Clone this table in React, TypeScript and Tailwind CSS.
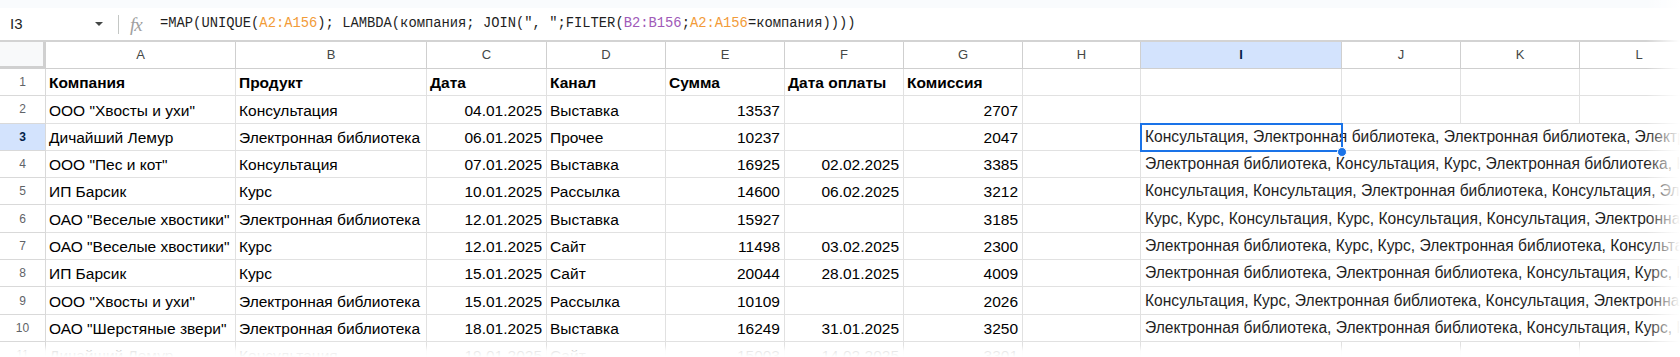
import React from 'react';

// column widths (A..H), then I, J, K, L
const W = ['w-[190px]', 'w-[191px]', 'w-[120px]', 'w-[119px]', 'w-[119px]', 'w-[119px]', 'w-[119px]', 'w-[118px]'];
const LETTERS = ['A', 'B', 'C', 'D', 'E', 'F', 'G', 'H'];
// right-aligned columns: C (date), E (sum), F (payment date), G (commission)
const RIGHT = [false, false, true, false, true, true, true, false];

type Row = { n: number; cells: string[]; i?: string };

const ROWS: Row[] = [
  { n: 2, cells: ['ООО "Хвосты и ухи"', 'Консультация', '04.01.2025', 'Выставка', '13537', '', '2707'] },
  {
    n: 3,
    cells: ['Дичайший Лемур', 'Электронная библиотека', '06.01.2025', 'Прочее', '10237', '', '2047'],
    i: 'Консультация, Электронная библиотека, Электронная библиотека, Электронная библиотека, Курс',
  },
  {
    n: 4,
    cells: ['ООО "Пес и кот"', 'Консультация', '07.01.2025', 'Выставка', '16925', '02.02.2025', '3385'],
    i: 'Электронная библиотека, Консультация, Курс, Электронная библиотека, Курс',
  },
  {
    n: 5,
    cells: ['ИП Барсик', 'Курс', '10.01.2025', 'Рассылка', '14600', '06.02.2025', '3212'],
    i: 'Консультация, Консультация, Электронная библиотека, Консультация, Электронная библиотека',
  },
  {
    n: 6,
    cells: ['ОАО "Веселые хвостики"', 'Электронная библиотека', '12.01.2025', 'Выставка', '15927', '', '3185'],
    i: 'Курс, Курс, Консультация, Курс, Консультация, Консультация, Электронная библиотека',
  },
  {
    n: 7,
    cells: ['ОАО "Веселые хвостики"', 'Курс', '12.01.2025', 'Сайт', '11498', '03.02.2025', '2300'],
    i: 'Электронная библиотека, Курс, Курс, Электронная библиотека, Консультация, Курс',
  },
  {
    n: 8,
    cells: ['ИП Барсик', 'Курс', '15.01.2025', 'Сайт', '20044', '28.01.2025', '4009'],
    i: 'Электронная библиотека, Электронная библиотека, Консультация, Курс, Курс',
  },
  {
    n: 9,
    cells: ['ООО "Хвосты и ухи"', 'Электронная библиотека', '15.01.2025', 'Рассылка', '10109', '', '2026'],
    i: 'Консультация, Курс, Электронная библиотека, Консультация, Электронная библиотека',
  },
  {
    n: 10,
    cells: ['ОАО "Шерстяные звери"', 'Электронная библиотека', '18.01.2025', 'Выставка', '16249', '31.01.2025', '3250'],
    i: 'Электронная библиотека, Электронная библиотека, Консультация, Курс, Курс',
  },
  { n: 11, cells: ['Дичайший Лемур', 'Консультация', '19.01.2025', 'Сайт', '15003', '14.02.2025', '3301'] },
];

const HEAD = ['Компания', 'Продукт', 'Дата', 'Канал', 'Сумма', 'Дата оплаты', 'Комиссия'];

function RowHeader({ n, active }: { n: number; active?: boolean }) {
  return (
    <div
      className={`w-[46px] shrink-0 flex items-center justify-center border-r border-b border-[#d9d9d9] text-[12px] ${
        active ? 'bg-[#d3e3fd] text-[#041e49] font-bold' : 'bg-white text-[#5f6368]'
      }`}
    >
      {n}
    </div>
  );
}

function EmptyTail() {
  return (
    <>
      <div className="w-[201px] shrink-0 border-r border-b border-[#e1e1e1]" />
      <div className="w-[119px] shrink-0 border-r border-b border-[#e1e1e1]" />
      <div className="w-[119px] shrink-0 border-r border-b border-[#e1e1e1]" />
      <div className="flex-1 border-b border-[#e1e1e1]" />
    </>
  );
}

function DataRow({ row, bold }: { row: Row; bold?: boolean }) {
  const cells = [...row.cells, ''];
  const selected = row.n === 3;
  return (
    <div className="flex h-[27.3px]">
      <RowHeader n={row.n} active={selected} />
      {cells.map((c, k) => (
        <div
          key={k}
          className={`${W[k]} shrink-0 flex items-end pb-[3px] pl-[3px] pr-[4px] border-r border-b border-[#e1e1e1] overflow-hidden whitespace-nowrap leading-[18px] text-[15.5px] text-black ${
            RIGHT[k] && !bold ? 'justify-end' : 'justify-start'
          } ${bold ? 'font-bold' : ''}`}
        >
          {c}
        </div>
      ))}
      {row.i ? (
        <div className="relative flex-1 min-w-0 border-b border-[#e1e1e1]">
          <div className="h-full flex items-end pb-[4px] pl-[4px] overflow-hidden whitespace-nowrap text-[15.6px] leading-[18px] text-[#1f1f1f]">
            {row.i}
          </div>
          {selected && (
            <>
              <div className="absolute left-[-1px] top-[-1px] w-[203px] h-[29px] border-2 border-[#1a73e8] pointer-events-none" />
              <div className="absolute left-[196px] top-[23px] w-[10px] h-[10px] rounded-full bg-[#1a73e8] border border-white" />
            </>
          )}
        </div>
      ) : (
        <EmptyTail />
      )}
    </div>
  );
}

function FormulaBar() {
  return (
    <div className="h-[32px] flex items-center bg-white">
      <div className="w-[92px] pl-[10px] text-[15px] text-[#1f1f1f]">I3</div>
      <svg width="10" height="6" viewBox="0 0 10 6" className="ml-[2px]">
        <path d="M1 1h8L5 5z" fill="#444746" />
      </svg>
      <div className="ml-[14px] w-px h-[19px] bg-[#c4c7c5]" />
      <div className="ml-[11px] w-[30px] font-['Liberation_Serif',serif] italic text-[19px] leading-none text-[#a0a0a0] tracking-[-1px]">
        fx
      </div>
      <div className="font-['Liberation_Mono',monospace] text-[13.8px] text-[#1f1f1f] whitespace-nowrap">
        =MAP(UNIQUE(<span className="text-[#f29b38]">A2:A156</span>); LAMBDA(компания; JOIN(", ";FILTER(
        <span className="text-[#a05ab8]">B2:B156</span>;<span className="text-[#f29b38]">A2:A156</span>=компания))))
      </div>
    </div>
  );
}

export default function App() {
  return (
    <div className="relative w-[1680px] h-[357px] overflow-hidden bg-white font-['Liberation_Sans',Arial,sans-serif]">
      <div className="h-[8px] bg-[#f9fbfd]" />
      <FormulaBar />

      {/* column headers */}
      <div className="flex h-[29px] border-t-2 border-[#d3d3d3]">
        <div className="w-[46px] shrink-0 bg-[#f8f9fa] border-r-[3px] border-b-[3px] border-[#d0d0d0]" />
        {LETTERS.map((l, k) => (
          <div
            key={l}
            className={`${W[k]} shrink-0 flex items-center justify-center border-r border-b border-[#cfcfcf] text-[13px] text-[#444746]`}
          >
            {l}
          </div>
        ))}
        <div className="w-[201px] shrink-0 flex items-center justify-center bg-[#d3e3fd] border-r border-b border-[#cfcfcf] text-[13px] font-bold text-[#041e49]">
          I
        </div>
        <div className="w-[119px] shrink-0 flex items-center justify-center border-r border-b border-[#cfcfcf] text-[13px] text-[#444746]">
          J
        </div>
        <div className="w-[119px] shrink-0 flex items-center justify-center border-r border-b border-[#cfcfcf] text-[13px] text-[#444746]">
          K
        </div>
        <div className="flex-1 flex items-center justify-center border-b border-[#cfcfcf] text-[13px] text-[#444746] pl-[18px]">
          L
        </div>
      </div>

      <DataRow row={{ n: 1, cells: HEAD }} bold />
      {ROWS.map((r) => (
        <DataRow key={r.n} row={r} />
      ))}

      {/* screenshot fades */}
      <div className="absolute top-0 right-0 h-full w-[34px] bg-linear-to-r from-white/0 to-white pointer-events-none" />
      <div className="absolute bottom-0 left-0 w-full h-[12px] bg-linear-to-b from-white/0 via-white/90 to-white pointer-events-none" />
    </div>
  );
}
